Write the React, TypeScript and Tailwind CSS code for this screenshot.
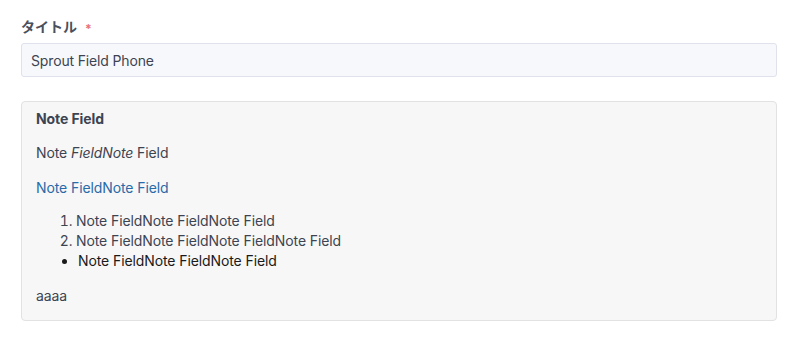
import React from "react";

export default function App() {
  return (
    <div className="min-h-[339px] w-[800px] bg-white pl-[21px] pr-[23px] pt-[16px] text-[14px] text-[#3d4451]" style={{ fontFamily: 'Inter, "Noto Sans CJK JP", sans-serif' }}>
      <div className="flex items-center gap-[8px] h-[20px] mb-[7px]">
        <span className="text-[14px] font-bold text-[#4a505c]" style={{ fontFamily: '"Noto Sans CJK JP", Inter, sans-serif' }}>タイトル</span>
        <span className="text-[#e8716f] text-[12px] font-bold leading-none mt-[6px]">*</span>
      </div>
      <div className="h-[34px] rounded-[3px] border border-[#dfe2ec] bg-[#f7f8fc] px-[9px] flex items-center text-[14px] tracking-[-0.15px] text-[#3d4451]">
        Sprout Field Phone
      </div>
      <div className="mt-[24px] rounded-[4px] border border-[#e2e2e2] bg-[#f7f7f7] px-[14px] pt-[7px] pb-[14px] leading-[20px] tracking-[-0.1px]">
        <div className="font-bold text-[#3d4451]">Note Field</div>
        <p className="mt-[14px]">Note <em>FieldNote</em> Field</p>
        <p className="mt-[15px] text-[#2a6aa8]">Note FieldNote Field</p>
        <ol className="mt-[13px] list-decimal pl-[40px]">
          <li>Note FieldNote FieldNote Field</li>
          <li>Note FieldNote FieldNote FieldNote Field</li>
        </ol>
        <ul className="list-disc pl-[42px] text-[#1a1a1a]">
          <li>Note FieldNote FieldNote Field</li>
        </ul>
        <p className="mt-[15px]">aaaa</p>
      </div>
    </div>
  );
}
